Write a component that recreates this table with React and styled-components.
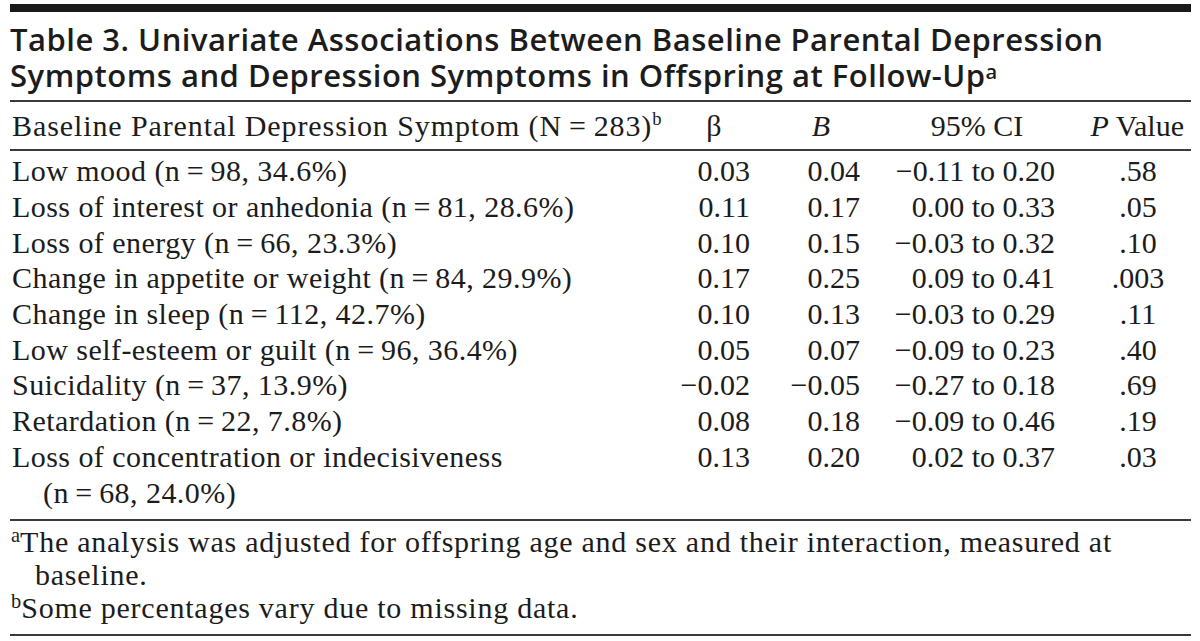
import React from 'react';
import styled, { createGlobalStyle } from 'styled-components';

const GlobalStyle = createGlobalStyle`
  html, body {
    margin: 0;
    padding: 0;
    background: #ffffff;
  }
`;

const Page = styled.div`
  padding: 4px 9px 0 10px;
  color: #1c1c1c;
`;

const TopBar = styled.div`
  height: 8px;
  background: #1a1a1a;
`;

const Title = styled.h1`
  margin: 10px 0 0;
  padding: 0 0 7px 0;
  font-family: "Open Sans", Lato, sans-serif;
  font-weight: 600;
  font-size: 31px;
  line-height: 35.5px;
  letter-spacing: 0.5px;
  color: #1c1c1c;
`;

const Rule = styled.div`
  height: 2px;
  background: #3a3a3a;
`;

const Body = styled.div`
  padding: 2.5px 0 9px;
`;

const Row = styled.div`
  display: grid;
  grid-template-columns: 660px 90px 110px 195px 1fr;
  font-family: "Liberation Serif", "Times New Roman", serif;
  font-size: 30px;
  line-height: 35.7px;
  padding-top: ${p => p.$padTop || 0}px;
  padding-bottom: ${p => p.$padBottom || 0}px;
`;

const Label = styled.div`
  padding-left: ${p => (p.$wrap ? 33 : 2)}px;
  text-indent: ${p => (p.$wrap ? -31 : 0)}px;
  letter-spacing: 0.45px;
`;

const Num = styled.div`
  text-align: ${p => p.$align || 'right'};
  padding-right: ${p => p.$pr || 0}px;
  padding-left: ${p => p.$pl || 0}px;
  white-space: nowrap;
`;

const Head = styled.div`
  text-align: ${p => p.$align || 'center'};
  padding-right: ${p => p.$pr || 0}px;
  padding-left: ${p => p.$pl || 0}px;
  letter-spacing: ${p => p.$ls || 0}px;
  white-space: nowrap;
`;

const Sup = styled.sup`
  font-size: ${p => p.$size || '0.62em'};
  line-height: 0;
  letter-spacing: 0;
  vertical-align: ${p => p.$lift || '0.6em'};
`;

const Footnotes = styled.div`
  padding: 3.5px 0 10.5px;
  font-family: "Liberation Serif", "Times New Roman", serif;
  font-size: 30px;
  line-height: 33px;
  letter-spacing: 0.75px;
`;

const Note = styled.p`
  margin: 0;
  padding-left: 25px;
  text-indent: -24px;
`;

const eq = '\u2009=\u2009';

const rows = [
  [`Low mood (n${eq}98, 34.6%)`, '0.03', '0.04', '\u22120.11 to 0.20', '.58'],
  [`Loss of interest or anhedonia (n${eq}81, 28.6%)`, '0.11', '0.17', '0.00 to 0.33', '.05'],
  [`Loss of energy (n${eq}66, 23.3%)`, '0.10', '0.15', '\u22120.03 to 0.32', '.10'],
  [`Change in appetite or weight (n${eq}84, 29.9%)`, '0.17', '0.25', '0.09 to 0.41', '.003'],
  [`Change in sleep (n${eq}112, 42.7%)`, '0.10', '0.13', '\u22120.03 to 0.29', '.11'],
  [`Low self-esteem or guilt (n${eq}96, 36.4%)`, '0.05', '0.07', '\u22120.09 to 0.23', '.40'],
  [`Suicidality (n${eq}37, 13.9%)`, '\u22120.02', '\u22120.05', '\u22120.27 to 0.18', '.69'],
  [`Retardation (n${eq}22, 7.8%)`, '0.08', '0.18', '\u22120.09 to 0.46', '.19'],
  [null, '0.13', '0.20', '0.02 to 0.37', '.03'],
];

export default function App() {
  return (
    <Page>
      <GlobalStyle />
      <TopBar />
      <Title>
        Table 3. Univariate Associations Between Baseline Parental Depression
        <br />
        Symptoms and Depression Symptoms in Offspring at Follow-Up<Sup $size="0.65em" $lift="0.42em">a</Sup>
      </Title>
      <Rule />
      <Row $padTop={6.3} $padBottom={4.7}>
        <Head $align="left" $pl={2} $ls={0.9}>
          Baseline Parental Depression Symptom (N{eq}283)<Sup>b</Sup>
        </Head>
        <Head $pr={2}>β</Head>
        <Head $pl={12}><i>B</i></Head>
        <Head $pl={19}>95% CI</Head>
        <Head $align="right" $pr={7}><i>P</i> Value</Head>
      </Row>
      <Rule />
      <Body>
        {rows.map((r, i) => (
          <Row key={i}>
            <Label $wrap={r[0] === null}>
              {r[0] === null ? (
                <>Loss of concentration or indecisiveness<br />(n{eq}68, 24.0%)</>
              ) : r[0]}
            </Label>
            <Num $pr={10}>{r[1]}</Num>
            <Num $pr={10}>{r[2]}</Num>
            <Num $pr={10}>{r[3]}</Num>
            <Num $align="center" $pl={20}>{r[4]}</Num>
          </Row>
        ))}
      </Body>
      <Rule />
      <Footnotes>
        <Note>
          <Sup $size="0.68em" $lift="0.5em">a</Sup>The analysis was adjusted for offspring age and sex and their interaction, measured at
          <br />
          baseline.
        </Note>
        <Note>
          <Sup $size="0.68em" $lift="0.5em">b</Sup>Some percentages vary due to missing data.
        </Note>
      </Footnotes>
      <Rule />
    </Page>
  );
}
